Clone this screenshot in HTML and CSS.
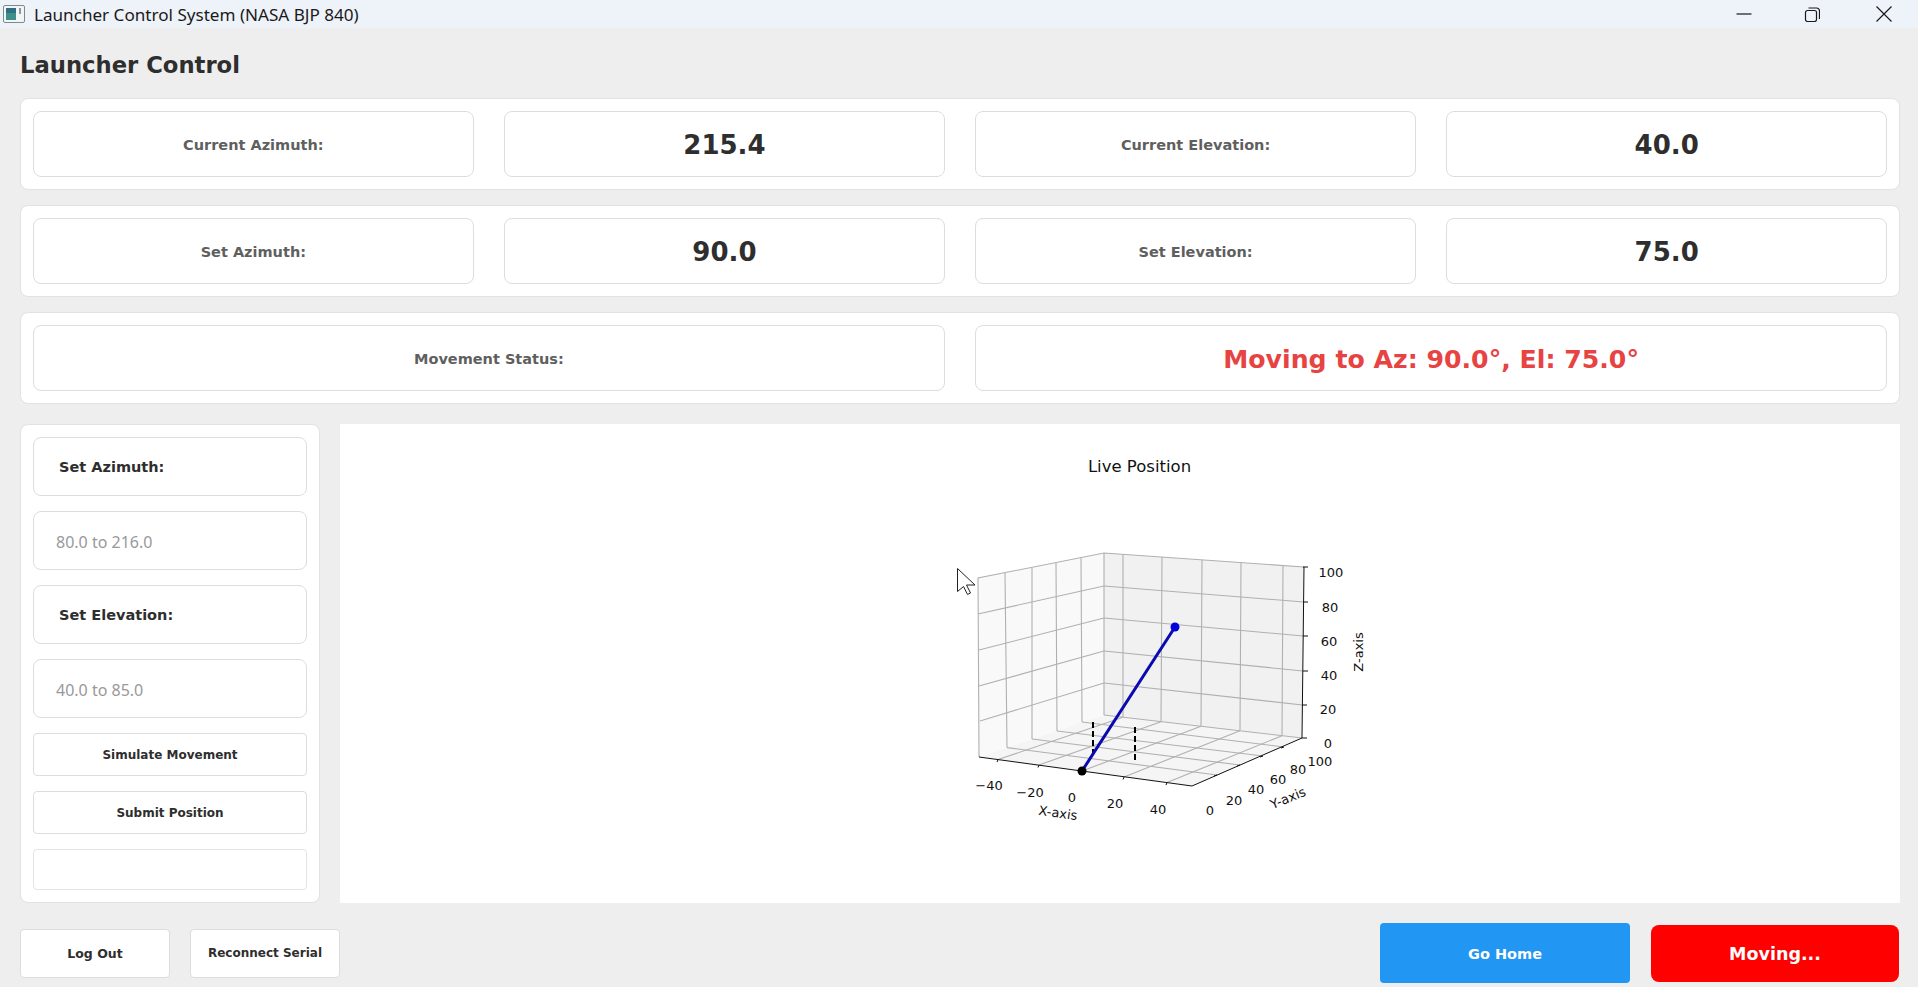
FILE: index.html
```html
<!DOCTYPE html>
<html>
<head>
	<title>Launcher Control System (NASA BJP 840)</title>
	<link rel="stylesheet" href="styles.css">
</head>
<body>
	<div class="titlebar">
		<svg class="app-icon" width="22" height="18" viewBox="0 0 22 18">
			<rect x="0.5" y="0.5" width="21" height="17" rx="1.5" fill="#f2f4f6" stroke="#7d8a90"/>
			<rect x="3" y="3" width="10" height="12" fill="#3f8f88"/>
			<rect x="3" y="3" width="10" height="5" fill="#2f6f86"/>
			<rect x="16" y="3" width="2" height="6" fill="#8a9aa0"/>
		</svg>
		<span class="app-title">Launcher Control System (NASA BJP 840)</span>
		<div class="win-buttons">
			<svg class="win-min" width="16" height="16" viewBox="0 0 16 16"><path class="win-glyph" d="M0.5 8h15"/></svg>
			<svg class="win-max" width="16" height="16" viewBox="0 0 16 16"><path class="win-glyph" d="M1.5 6.5a2 2 0 0 1 2-2h7a2 2 0 0 1 2 2v7a2 2 0 0 1-2 2h-7a2 2 0 0 1-2-2zM4.5 2h8a3 3 0 0 1 3 3v8"/></svg>
			<svg width="16" height="16" viewBox="0 0 16 16"><path class="win-glyph" d="M0.5 0.5l15 15M15.500 0.5l-15 15"/></svg>
		</div>
	</div>

	<div class="main">
		<h1 class="heading">Launcher Control</h1>

		<div class="card">
			<div class="cell label">Current Azimuth:</div>
			<div class="cell value">215.4</div>
			<div class="cell label">Current Elevation:</div>
			<div class="cell value">40.0</div>
		</div>
		<div class="card">
			<div class="cell label">Set Azimuth:</div>
			<div class="cell value">90.0</div>
			<div class="cell label">Set Elevation:</div>
			<div class="cell value">75.0</div>
		</div>
		<div class="card">
			<div class="cell label wide">Movement Status:</div>
			<div class="cell status wide">Moving to Az: 90.0°, El: 75.0°</div>
		</div>

		<div class="lower">
			<div class="panel">
				<div class="field field-label">Set Azimuth:</div>
				<div class="field field-input">80.0 to 216.0</div>
				<div class="field field-label">Set Elevation:</div>
				<div class="field field-input">40.0 to 85.0</div>
				<div class="panel-btn">Simulate Movement</div>
				<div class="panel-btn">Submit Position</div>
				<div class="panel-empty"></div>
			</div>

			<div class="plot">
				<svg class="chart" width="1560" height="479" viewBox="340 424 1560 479">
					<text class="plot-title" x="1139.500" y="466">Live Position</text>

					<!-- walls and floor -->
					<polygon class="wall-left" points="979,757 978,578 1104,553 1104,715"/>
					<polygon class="wall-right" points="1104,715 1104,553 1304,567 1302,738"/>
					<polygon class="wall-floor" points="1104,715 979,757 1192,786 1302,738"/>

					<!-- grid -->
					<path class="grid" d="M979 757L978 578L1104 553L1304 567M1104 553V715"/>
					<path class="grid" d="M1005 573L1007 747.600M1032 568V739M1056 563L1057 731M1081 558L1082 722"/>
					<path class="grid" d="M978 614L1104 586M979 650L1104 618M979 686L1104 651M980 721L1104 683"/>
					<path class="grid" d="M1123 554.300V717.200M1162 557.100L1161 721.700M1202 559.900L1201 726.300M1241 562.600L1240 730.800M1283 565.500L1282 735.700"/>
					<path class="grid" d="M1104 586L1303.600 602M1104 618L1303.200 636M1104 651L1302.800 671M1104 683L1302.400 705"/>
					<path class="grid" d="M1123 717.200L998 759.600M1161 721.700L1039 765M1201 726.300L1082 771M1240 730.800L1124 777M1282 735.700L1167 782.600"/>
					<path class="grid" d="M1007 747.600L1217 775M1032 739L1240 765M1057 731L1263 756M1082 722L1284 747M1104 715L1302 738"/>

					<!-- axes -->
					<path class="axis" d="M979 757L1192 786L1302 738L1304 567"/>
					<path class="axis" d="M998 759.600l-1 2.500M1039 765l-1 2.500M1082 771l-1 2.500M1124 777l-1 2.500M1167 782.600l-1 2.500"/>
					<path class="axis" d="M1217 775l-3 1M1240 765l-3 1M1263 756l-3 1M1284 747l-3 1"/>
					<path class="axis" d="M1303 567h5M1303 602h5M1303 636h5M1303 671h5M1302 705h5M1302 738h5"/>

					<!-- launcher -->
					<path class="dash" d="M1093 722V755"/>
					<path class="dash" d="M1135 727V762"/>
					<path class="arm" d="M1082 771L1175 627"/>
					<circle class="dot-base" cx="1082" cy="771" r="4.500"/>
					<circle class="dot-tip" cx="1175" cy="627" r="4.500"/>

					<!-- tick labels -->
					<text class="tick" x="1331" y="572">100</text>
					<text class="tick" x="1330" y="607">80</text>
					<text class="tick" x="1329" y="641">60</text>
					<text class="tick" x="1329" y="675">40</text>
					<text class="tick" x="1328" y="709">20</text>
					<text class="tick" x="1328" y="743">0</text>

					<text class="tick" x="1210" y="810">0</text>
					<text class="tick" x="1234" y="800">20</text>
					<text class="tick" x="1256" y="789">40</text>
					<text class="tick" x="1278" y="779">60</text>
					<text class="tick" x="1298" y="769">80</text>
					<text class="tick" x="1320" y="761">100</text>

					<text class="tick" x="989" y="785">−40</text>
					<text class="tick" x="1030" y="792">−20</text>
					<text class="tick" x="1072" y="797">0</text>
					<text class="tick" x="1115" y="803">20</text>
					<text class="tick" x="1158" y="809">40</text>

					<text class="tick" transform="translate(1058 813) rotate(8)">X-axis</text>
					<text class="tick" transform="translate(1288 798) rotate(-22)">Y-axis</text>
					<text class="tick" transform="translate(1358 652) rotate(-90)">Z-axis</text>

					<!-- mouse pointer caught in the shot -->
					<polygon class="pointer" points="957.500,568.500 957.500,591.500 963.500,586.500 967.500,594.500 970.500,593 966.500,585 975,585"/>
				</svg>
			</div>
		</div>

		<div class="footer">
			<div class="foot-btn logout">Log Out</div>
			<div class="foot-btn">Reconnect Serial</div>
			<div class="foot-space"></div>
			<div class="home-btn">Go Home</div>
			<div class="moving-btn">Moving...</div>
		</div>
	</div>
</body>
</html>
```
FILE: styles.css
```css
html, body{
	margin: 0;
	height: 987px;
	overflow: hidden;
}
body{
	background: #eeeeee;
	color: #2e2e2e;
	font-family: "DejaVu Sans", sans-serif;
}

.titlebar{
	display: flex;
	align-items: center;
	height: 28px;
	padding-left: 3px;
	background: #eef2f9;
}
.app-icon{
	margin-right: 9px;
}
.app-title{
	font-family: "Noto Sans", sans-serif;
	font-size: 17.1px;
	color: #1a1a1a;
}
.win-buttons{
	display: flex;
	margin-left: auto;
	margin-right: 26px;
}
.win-min{
	margin-right: 52px;
}
.win-max{
	margin-right: 56px;
}
.win-glyph{
	fill: none;
	stroke: #1a1a1a;
	stroke-width: 1.2;
}

.main{
	display: flex;
	flex-direction: column;
	padding: 0 18px 0 20px;
}
.heading{
	margin: 0;
	height: 70px;
	line-height: 75px;
	font-size: 22.7px;
	font-weight: bold;
}

.card{
	display: grid;
	grid-template-columns: repeat(4, 1fr);
	column-gap: 30.5px;
	height: 66px;
	padding: 12px;
	margin-bottom: 15px;
	background: #fff;
	border: 1px solid #e2e2e2;
	border-radius: 8px;
}
.cell{
	display: flex;
	align-items: center;
	justify-content: center;
	box-sizing: border-box;
	padding-top: 2px;
	background: #fff;
	border: 1px solid #dddddd;
	border-radius: 8px;
}
.wide{
	grid-column: span 2;
}
.label{
	font-size: 14.5px;
	font-weight: bold;
	color: #5f5f5f;
}
.value{
	font-size: 26px;
	font-weight: bold;
}
.status{
	font-size: 25.2px;
	font-weight: bold;
	color: #e84343;
}

.lower{
	display: flex;
	gap: 20px;
	height: 479px;
	margin-top: 5px;
}
.panel{
	display: flex;
	flex-direction: column;
	box-sizing: border-box;
	width: 300px;
	padding: 12px;
	background: #fff;
	border: 1px solid #e2e2e2;
	border-radius: 8px;
}
.field{
	display: flex;
	align-items: center;
	box-sizing: border-box;
	height: 59px;
	padding-top: 1px;
	margin-bottom: 15px;
	border: 1px solid #dddddd;
	border-radius: 8px;
}
.field-label{
	padding-left: 25px;
	font-size: 14.5px;
	font-weight: bold;
}
.field-input{
	padding-left: 22px;
	padding-top: 2px;
	font-family: "Noto Sans", sans-serif;
	font-size: 16px;
	color: #999999;
}
.panel-btn{
	display: flex;
	align-items: center;
	justify-content: center;
	box-sizing: border-box;
	height: 43px;
	margin-bottom: 15px;
	border: 1px solid #dddddd;
	border-radius: 4px;
	font-size: 12px;
	font-weight: bold;
}
.panel-empty{
	box-sizing: border-box;
	height: 41px;
	border: 1px solid #e4e4e4;
	border-radius: 4px;
}
.plot{
	flex: 1;
	background: #fff;
}
.chart{
	display: block;
}
.plot-title, .tick{
	text-anchor: middle;
	dominant-baseline: central;
	fill: #111;
}
.plot-title{
	font-size: 16.5px;
}
.tick{
	font-size: 13px;
}
.wall-left{
	fill: #f9f9f9;
}
.wall-right{
	fill: #f1f1f1;
}
.wall-floor{
	fill: #f5f5f5;
}
.grid{
	fill: none;
	stroke: #b0b0b0;
	stroke-width: 1.1;
}
.axis{
	fill: none;
	stroke: #111;
	stroke-width: 1;
}
.dash{
	fill: none;
	stroke: #000;
	stroke-width: 2;
	stroke-dasharray: 6 3;
}
.arm{
	stroke: #0a0ab0;
	stroke-width: 3;
}
.dot-base{
	fill: #000;
}
.dot-tip{
	fill: #0000d8;
}
.pointer{
	fill: #fff;
	stroke: #222;
	stroke-width: 1;
}

.footer{
	display: flex;
	align-items: center;
	gap: 20px;
	height: 60px;
	margin-top: 20px;
	padding-right: 1px;
}
.foot-btn{
	display: flex;
	align-items: center;
	justify-content: center;
	box-sizing: border-box;
	width: 150px;
	height: 49px;
	background: #fff;
	border: 1px solid #dddddd;
	border-radius: 4px;
	font-size: 12px;
	font-weight: bold;
}
.logout{
	font-size: 12.5px;
}
.foot-space{
	flex: 1;
}
.home-btn{
	display: flex;
	align-items: center;
	justify-content: center;
	box-sizing: border-box;
	width: 250px;
	height: 60px;
	padding-top: 2px;
	margin-right: 1px;
	background: #2196f3;
	border-radius: 4px;
	color: #fff;
	font-size: 14.5px;
	font-weight: bold;
}
.moving-btn{
	display: flex;
	align-items: center;
	justify-content: center;
	box-sizing: border-box;
	width: 248px;
	height: 57px;
	padding-top: 2px;
	background: #ff0000;
	border-radius: 8px;
	color: #fff;
	font-size: 17.5px;
	font-weight: bold;
}
```
